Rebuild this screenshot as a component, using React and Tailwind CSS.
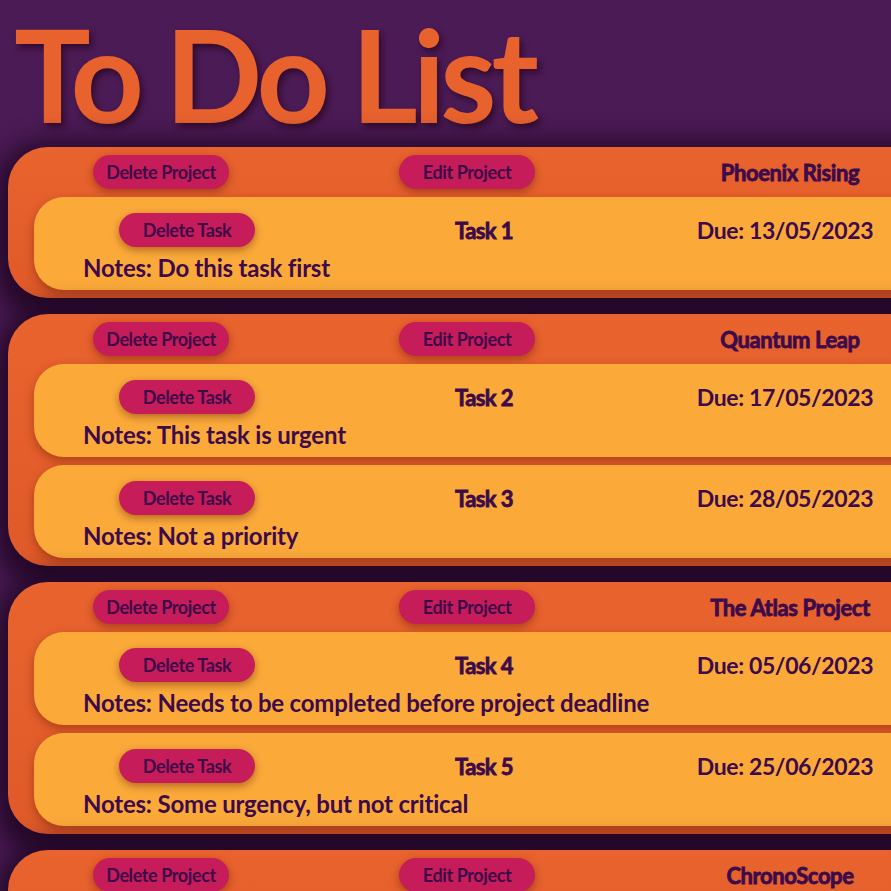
const projects = [
    {
        name: "Phoenix Rising",
        tasks: [{ title: "Task 1", due: "13/05/2023", notes: "Do this task first" }],
    },
    {
        name: "Quantum Leap",
        tasks: [
            { title: "Task 2", due: "17/05/2023", notes: "This task is urgent" },
            { title: "Task 3", due: "28/05/2023", notes: "Not a priority" },
        ],
    },
    {
        name: "The Atlas Project",
        tasks: [
            { title: "Task 4", due: "05/06/2023", notes: "Needs to be completed before project deadline" },
            { title: "Task 5", due: "25/06/2023", notes: "Some urgency, but not critical" },
        ],
    },
    {
        name: "ChronoScope",
        tasks: [{ title: "Task 6", due: "02/07/2023", notes: "Check with the team" }],
    },
];

function PillButton({ children }) {
    return (
        <button className="w-[136px] h-[34px] rounded-full bg-[#c61c59] text-[#3d0b4a] text-[18px] font-bold tracking-[-0.4px] leading-none shadow-[0_3px_8px_rgba(90,20,0,0.45)]">
            {children}
        </button>
    );
}

function TaskCard({ task }) {
    return (
        <div className="h-[93px] w-[920px] shrink-0 rounded-l-[30px] bg-[#fbaa3a] pt-4 shadow-[0_4px_10px_rgba(110,30,0,0.45)]">
            <div className="flex h-[34px] items-center">
                <div className="flex w-[306px] justify-center">
                    <PillButton>Delete Task</PillButton>
                </div>
                <div className="w-[288px] text-center text-[22px] font-bold tracking-[-0.6px] text-[#3d0b4a] [-webkit-text-stroke:0.8px_#3d0b4a]">
                    {task.title}
                </div>
                <div className="w-[314px] text-center text-[23px] font-bold tracking-[-0.4px] text-[#3d0b4a]">Due: {task.due}</div>
            </div>
            <p className="mt-[5px] pl-[49px] text-[24px] leading-[32px] font-bold tracking-[-0.2px] text-[#3d0b4a]">Notes: {task.notes}</p>
        </div>
    );
}

function ProjectCard({ project }) {
    return (
        <div className="w-[960px] shrink-0 rounded-l-[40px] bg-gradient-to-b from-[#e9632e] to-[#df5a29] pb-2 shadow-[0_8px_24px_14px_rgba(30,6,34,0.85)]">
            <div className="flex h-[50px] items-center">
                <div className="flex w-[306px] justify-center">
                    <PillButton>Delete Project</PillButton>
                </div>
                <div className="flex w-[306px] justify-center">
                    <PillButton>Edit Project</PillButton>
                </div>
                <div className="w-[340px] text-center text-[22px] font-bold tracking-[-0.4px] text-[#3d0b4a] [-webkit-text-stroke:0.8px_#3d0b4a]">
                    {project.name}
                </div>
            </div>
            <div className="flex flex-col gap-2 pl-[26px]">
                {project.tasks.map((t) => (
                    <TaskCard key={t.title} task={t} />
                ))}
            </div>
        </div>
    );
}

export default function App() {
    return (
        <div className="min-h-screen w-full overflow-hidden bg-[#4b1b55] font-['Lato',sans-serif]">
            <h1 className="h-[147px] pl-[14px] text-[128px] leading-[147px] font-bold tracking-[-5px] text-[#e8622e] [text-shadow:3px_4px_6px_rgba(40,5,30,0.7)]">
                To Do List
            </h1>
            <div className="flex flex-col gap-4 pl-2">
                {projects.map((p) => (
                    <ProjectCard key={p.name} project={p} />
                ))}
            </div>
        </div>
    );
}
